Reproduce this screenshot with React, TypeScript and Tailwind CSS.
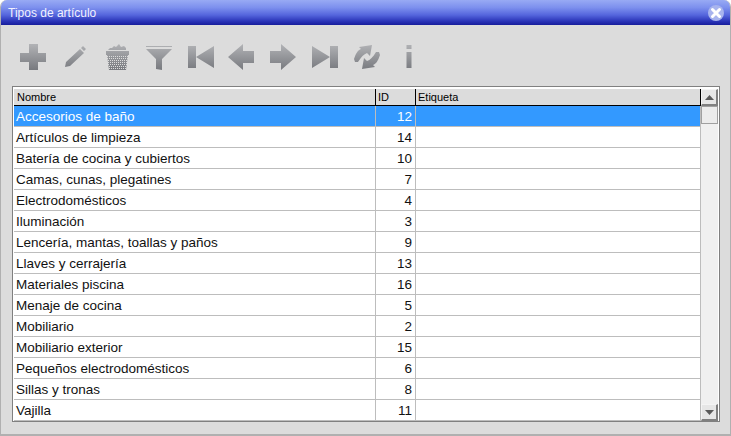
const rows: [string, number][] = [
  ['Accesorios de baño', 12],
  ['Artículos de limpieza', 14],
  ['Batería de cocina y cubiertos', 10],
  ['Camas, cunas, plegatines', 7],
  ['Electrodomésticos', 4],
  ['Iluminación', 3],
  ['Lencería, mantas, toallas y paños', 9],
  ['Llaves y cerrajería', 13],
  ['Materiales piscina', 16],
  ['Menaje de cocina', 5],
  ['Mobiliario', 2],
  ['Mobiliario exterior', 15],
  ['Pequeños electrodomésticos', 6],
  ['Sillas y tronas', 8],
  ['Vajilla', 11],
]

// toolbar icons, coordinates relative to a 42x30 cell
function ToolIcon({ children }: { children: React.ReactNode }) {
  return (
    <svg width="42" height="30" viewBox="0 0 42 30" fill="url(#toolGrey)">
      {children}
    </svg>
  )
}

function Toolbar() {
  return (
    <div className="flex h-[30px] mt-[18px] ml-[11px]">
      <svg width="0" height="0" className="absolute">
        <defs>
          <linearGradient id="toolGrey" gradientUnits="userSpaceOnUse" x1="0" y1="0" x2="0" y2="28">
            <stop offset="0" stopColor="#b4b5b8" />
            <stop offset="1" stopColor="#75777c" />
          </linearGradient>
        </defs>
      </svg>
      {/* add */}
      <ToolIcon>
        <path d="M17 1h9v9h8v9h-8v8h-9v-8H8v-9h9z" />
      </ToolIcon>
      {/* edit */}
      <ToolIcon>
        <path d="M29 3l3 3-2 2-3-3zM26 6l4 4-14 13-5 1 1-5z" />
      </ToolIcon>
      {/* delete */}
      <ToolIcon>
        <path d="M12 7l2-2 2 0 2-2 2 1 3-3 2 3 3-1 2 2 0 2z" />
        <path d="M10 8h23v4H10z" />
        <path d="M11 12h21l-2 15H13z" />
        <g stroke="#dcdcdc" strokeWidth="1" strokeDasharray="1 1">
          <path d="M11 13.500h21M11 15.500h21M12 17.500h19M12 19.500h19M12 21.500h19M13 23.500h17M13 25.500h17" />
        </g>
      </ToolIcon>
      {/* filter */}
      <ToolIcon>
        <path d="M8 3h26v1H8zM8 6h26l-10 10v11l-6-1V16z" />
      </ToolIcon>
      {/* first */}
      <ToolIcon>
        <path d="M8 3h8v11L34 3v22L16 14v11H8z" />
      </ToolIcon>
      {/* previous */}
      <ToolIcon>
        <path d="M6 14L21 1v7h11v12H21v7z" />
      </ToolIcon>
      {/* next */}
      <ToolIcon>
        <path d="M6 8h11V1l15 13-15 13v-7H6z" />
      </ToolIcon>
      {/* last */}
      <ToolIcon>
        <path d="M6 3l18 11V3h8v22h-8V14L6 25z" />
      </ToolIcon>
      {/* refresh */}
      <ToolIcon>
        <path d="M6 16C8 10 10 7 13 6L11 4 24 2 22 13 19 10C16 11 13 14 10 19L7 19z" />
        <path d="M32 12C30 18 28 21 25 22L27 24 14 26 16 15 19 18C22 17 25 14 28 9L31 9z" />
      </ToolIcon>
      {/* info */}
      <ToolIcon>
        <path d="M16.500 2h5v4h-5zM16.500 9h5v16h-5z" />
      </ToolIcon>
    </div>
  )
}

function ScrollArrow({ up }: { up?: boolean }) {
  return (
    <div className="h-[17px] shrink-0 bg-[#e6e6e6] border-t border-l border-t-[#f4f4f4] border-l-[#f4f4f4] border-r-2 border-b-2 border-r-[#808080] border-b-[#808080] flex items-center justify-center">
      <svg width="9" height="5" viewBox="0 0 9 5" fill="#5a5a5a">
        <path d={up ? 'M4.500 0L9 5H0z' : 'M0 0h9L4.500 5z'} />
      </svg>
    </div>
  )
}

export default function App() {
  return (
    <div className="w-[731px] h-[436px] bg-[#dcdcdc] flex flex-col overflow-hidden rounded-t-[7px] border-x border-b-2 border-[#b0b0b0] font-['Liberation_Sans',sans-serif] relative">
      <div className="h-[25px] -mx-px shrink-0 flex items-center justify-between pl-[8px] pr-[7px] bg-[linear-gradient(to_bottom,#98aaf4_0%,#7d90ee_30%,#5566dd_60%,#2a34b8_85%,#171d9c_100%)]">
        <span className="text-[12px] text-[#f2f2ff]">Tipos de artículo</span>
        <svg width="16" height="16" viewBox="0 0 16 16">
          <circle cx="8" cy="8" r="8" fill="#a8b4ee" />
          <path d="M4.500 4.500l7 7M11.500 4.500l-7 7" stroke="#ffffff" strokeWidth="3" strokeLinecap="round" />
        </svg>
      </div>

      <Toolbar />

      <div className="mt-[13px] ml-[11px] w-[708px] h-[336px] shrink-0 flex border border-[#808080] bg-white pl-px pr-px pt-[2px] overflow-hidden">
        <div className="w-[687px] shrink-0 flex flex-col">
          <div className="h-[17px] shrink-0 flex bg-[#dcdcdc] border-b border-black text-[11px] leading-[17px] text-black">
            <div className="w-[362px] shrink-0 pl-[3px] border-r border-black">Nombre</div>
            <div className="w-[40px] shrink-0 pl-[2px] border-r border-black">ID</div>
            <div className="flex-1 pl-[2px] border-r border-black">Etiqueta</div>
          </div>
          {rows.map(([name, id], i) => (
            <div
              key={id}
              className={`h-[21px] shrink-0 flex text-[13.5px] leading-[22px] border-b border-[#bdbdbd] ${
                i === 0 ? 'bg-[#3399ff] text-white' : 'text-[#111111]'
              }`}
            >
              <div className="w-[362px] shrink-0 pl-[2px] border-r border-[#bdbdbd] whitespace-nowrap">{name}</div>
              <div className="w-[40px] shrink-0 pr-[3px] text-right border-r border-[#bdbdbd]">{id}</div>
              <div className="flex-1 border-r border-[#bdbdbd]" />
            </div>
          ))}
        </div>
        <div className="flex-1 flex flex-col bg-[#f0f0f0]">
          <ScrollArrow up />
          <div className="h-[18px] shrink-0 bg-[#ececec] border border-[#a0a0a0]" />
          <div className="flex-1" />
          <ScrollArrow />
        </div>
      </div>
    </div>
  )
}
